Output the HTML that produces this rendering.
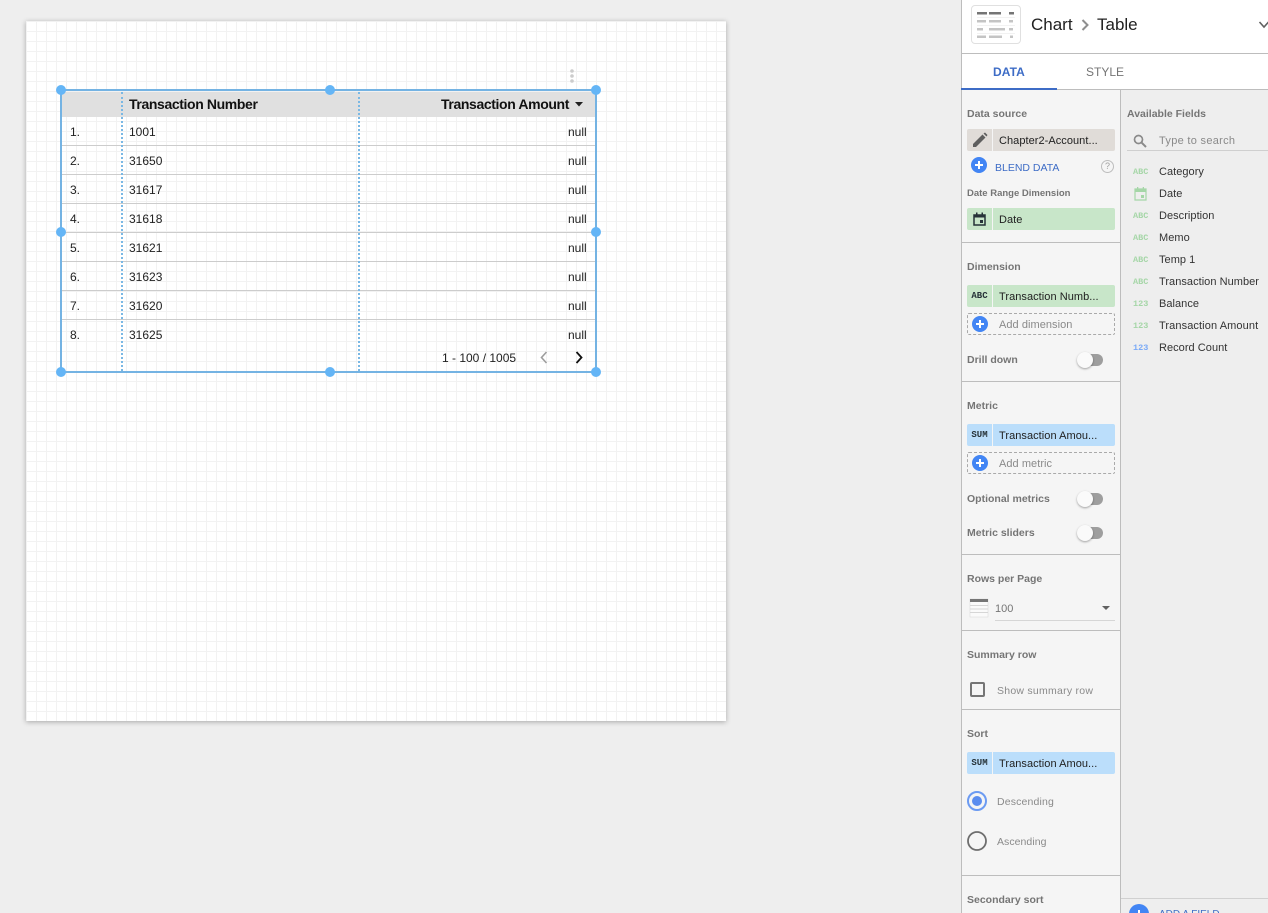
<!DOCTYPE html>
<html><head><meta charset="utf-8">
<style>
html,body{margin:0;padding:0;width:1268px;height:913px;overflow:hidden;background:#eeeeee;font-family:"Liberation Sans",sans-serif;color:#212121}
div,span{position:absolute;box-sizing:border-box;white-space:nowrap}
svg{position:absolute;overflow:visible}
.root{left:0;top:0;width:1268px;height:913px;overflow:hidden;background:#eeeeee}
.canvas{left:26px;top:21px;width:700px;height:700px;background-color:#fff;background-image:linear-gradient(to right,#f2f2f2 1px,transparent 1px),linear-gradient(to bottom,#f2f2f2 1px,transparent 1px);background-size:10px 10px;background-position:0 0;box-shadow:0 1px 5px rgba(0,0,0,.3)}
.t{font-size:12px;line-height:16px;color:#212121}
.th{font-size:14px;font-weight:bold;line-height:18px;color:#111;letter-spacing:-.38px}
.hl{left:62px;width:533px;height:1px;background:#cccccc}
.h{width:10px;height:10px;border-radius:50%;background:#64b5f6}
.lab{left:967px;font-size:10.5px;font-weight:bold;color:#757575;line-height:16px}
.div{left:962px;width:158px;height:1px;background:#bdbdbd}
.ic{left:967px;width:25px;height:22px;border-radius:2px 0 0 2px;font-size:9px;font-weight:bold;text-align:center;line-height:23px;color:#263238}
.pill{left:993px;width:122px;height:22px;border-radius:0 2px 2px 0;font-size:11px;line-height:24px;padding-left:6px;color:#212121;letter-spacing:.05px}
.g{background:#c8e6c9}.b{background:#bbdefb}.n{background:#e0dcd8}
.dash{left:967px;width:148px;height:22px;border:1px dashed #aaaaaa;border-radius:2px}
.plus{width:16px;height:16px;border-radius:50%;background:linear-gradient(#fff,#fff) center/8px 2px no-repeat,linear-gradient(#fff,#fff) center/2px 8px no-repeat,#4285f4}
.ph{font-size:11px;line-height:16px;color:#8a8a8a;letter-spacing:.05px}
.tg{left:1077px;width:28px;height:16px}
.tr{left:7px;top:2px;width:19px;height:12px;border-radius:6px;background:#9e9e9e}
.kn{left:0;top:0;width:16px;height:16px;border-radius:50%;background:#fafafa;box-shadow:0 1px 2px rgba(0,0,0,.35)}
.fi{left:1159px;font-size:11px;line-height:16px;color:#333;letter-spacing:.04px}
.ft{left:1133px;width:15px;font-size:8.5px;font-weight:bold;line-height:14px;text-align:center;color:#a5d6a7;font-family:"Liberation Mono",monospace}
</style></head><body>
<div class="root">

<div class="canvas"></div>

<!-- table -->
<div style="left:62px;top:92px;width:533px;height:25px;background:#e0e0e0"></div>
<div class="hl" style="top:145px"></div><div class="hl" style="top:174px"></div><div class="hl" style="top:203px"></div><div class="hl" style="top:232px"></div><div class="hl" style="top:261px"></div><div class="hl" style="top:290px"></div><div class="hl" style="top:319px"></div>
<div style="left:121px;top:92px;width:0;height:279px;border-left:2px dotted #7ab8e4"></div>
<div style="left:358px;top:92px;width:0;height:279px;border-left:2px dotted #7ab8e4"></div>
<div style="left:60px;top:89px;width:537px;height:284px;border:2px solid #74b3e3"></div>
<div class="h" style="left:56px;top:85px"></div><div class="h" style="left:325px;top:85px"></div><div class="h" style="left:591px;top:85px"></div>
<div class="h" style="left:56px;top:227px"></div><div class="h" style="left:591px;top:227px"></div>
<div class="h" style="left:56px;top:367px"></div><div class="h" style="left:325px;top:367px"></div><div class="h" style="left:591px;top:367px"></div>
<svg style="left:569px;top:69px" width="6" height="14"><circle cx="3" cy="2" r="1.8" fill="#cccccc"/><circle cx="3" cy="7" r="1.8" fill="#cccccc"/><circle cx="3" cy="12" r="1.8" fill="#cccccc"/></svg>

<div class="th" style="left:129px;top:95px">Transaction Number</div>
<div class="th" style="left:441px;top:95px">Transaction Amount</div>
<svg style="left:575px;top:102px" width="8" height="5"><path d="M0 0H8L4 4.5Z" fill="#212121"/></svg>

<div class="t" style="left:70px;top:124px">1.</div><div class="t" style="left:129px;top:124px">1001</div><div class="t" style="left:568px;top:124px">null</div>
<div class="t" style="left:70px;top:153px">2.</div><div class="t" style="left:129px;top:153px">31650</div><div class="t" style="left:568px;top:153px">null</div>
<div class="t" style="left:70px;top:182px">3.</div><div class="t" style="left:129px;top:182px">31617</div><div class="t" style="left:568px;top:182px">null</div>
<div class="t" style="left:70px;top:211px">4.</div><div class="t" style="left:129px;top:211px">31618</div><div class="t" style="left:568px;top:211px">null</div>
<div class="t" style="left:70px;top:240px">5.</div><div class="t" style="left:129px;top:240px">31621</div><div class="t" style="left:568px;top:240px">null</div>
<div class="t" style="left:70px;top:269px">6.</div><div class="t" style="left:129px;top:269px">31623</div><div class="t" style="left:568px;top:269px">null</div>
<div class="t" style="left:70px;top:298px">7.</div><div class="t" style="left:129px;top:298px">31620</div><div class="t" style="left:568px;top:298px">null</div>
<div class="t" style="left:70px;top:327px">8.</div><div class="t" style="left:129px;top:327px">31625</div><div class="t" style="left:568px;top:327px">null</div>

<div class="t" style="left:442px;top:350px">1 - 100 / 1005</div>
<svg style="left:540px;top:351px" width="8" height="13"><path d="M6.5 1L1.5 6.5L6.5 12" fill="none" stroke="#9e9e9e" stroke-width="1.6"/></svg>
<svg style="left:575px;top:351px" width="8" height="13"><path d="M1.5 1L6.5 6.5L1.5 12" fill="none" stroke="#111" stroke-width="1.8"/></svg>

<!-- panel -->
<div style="left:961px;top:0;width:307px;height:913px;background:#eeeeee;border-left:1px solid #bdbdbd"></div>
<div style="left:962px;top:0;width:306px;height:54px;background:#fff;border-bottom:1px solid #bdbdbd"></div>
<div style="left:962px;top:54px;width:306px;height:36px;background:#fff;border-bottom:1px solid #bdbdbd"></div>
<div style="left:962px;top:90px;width:158px;height:823px;background:#f5f5f5"></div>
<div style="left:1120px;top:90px;width:1px;height:823px;background:#bdbdbd"></div>
<div style="left:961px;top:88px;width:96px;height:2px;background:#3d6cc6"></div>

<!-- chart icon -->
<div style="left:971px;top:5px;width:50px;height:39px;border:1px solid #e0e0e0;border-radius:4px;background:#fff"></div>
<svg style="left:977px;top:12px" width="38" height="27">
<g fill="#757575"><rect x="0" y="0" width="10" height="2.5"/><rect x="12" y="0" width="12" height="2.5"/><rect x="32" y="0" width="5" height="2.5"/></g>
<g fill="#c4c4c4"><rect x="0" y="8" width="9" height="2.5"/><rect x="12" y="8" width="12" height="2.5"/><rect x="32" y="8" width="4" height="2.5"/>
<rect x="0" y="16" width="6" height="2.5"/><rect x="12" y="16" width="16" height="2.5"/><rect x="32" y="16" width="4" height="2.5"/>
<rect x="0" y="23.5" width="9" height="2.5"/><rect x="12" y="23.5" width="13" height="2.5"/><rect x="33" y="23.5" width="3" height="2.5"/></g>
<g fill="#f2f2f2"><rect x="0" y="5" width="38" height="1"/><rect x="0" y="13" width="38" height="1"/><rect x="0" y="21" width="38" height="1"/></g>
</svg>
<div style="left:1031px;top:15px;font-size:17px;line-height:20px;color:#212121">Chart</div>
<svg style="left:1081px;top:19px" width="8" height="12"><path d="M1.5 1L6.5 6L1.5 11" fill="none" stroke="#8f8f8f" stroke-width="2"/></svg>
<div style="left:1097px;top:15px;font-size:17px;line-height:20px;color:#212121">Table</div>
<svg style="left:1259px;top:21px" width="10" height="8"><path d="M0.5 1L5 6L9.5 1" fill="none" stroke="#616161" stroke-width="1.6"/></svg>

<div style="left:993px;top:64px;font-size:12px;font-weight:bold;line-height:16px;color:#3d6cc6;letter-spacing:.1px">DATA</div>
<div style="left:1086px;top:64px;font-size:12px;line-height:16px;color:#757575">STYLE</div>

<!-- Left column -->
<div class="lab" style="top:106px">Data source</div>
<div class="ic n" style="top:129px"></div>
<svg style="left:972px;top:132px" width="16" height="16"><path d="M1 15V12L10.5 2.5L13.5 5.5L4 15ZM11.5 1.5L13 0.5L15.5 3L14.5 4.5Z" fill="#5f5f5f"/></svg>
<div class="pill n" style="top:129px">Chapter2-Account...</div>
<div class="plus" style="left:971px;top:157px"></div>
<div style="left:995px;top:160px;font-size:10.5px;line-height:16px;color:#3d6cc6">BLEND DATA</div>
<div style="left:1101px;top:160px;width:13px;height:13px;border:1.5px solid #bdbdbd;border-radius:50%;font-size:9px;line-height:10px;text-align:center;color:#9e9e9e">?</div>
<div class="lab" style="top:186px;font-size:9.5px">Date Range Dimension</div>
<div class="ic g" style="top:208px"></div>
<svg style="left:973px;top:212px" width="13" height="14"><path d="M1 3H12V13H1Z" fill="none" stroke="#263238" stroke-width="1.5"/><path d="M1 3H12V5.5H1Z" fill="#263238"/><rect x="3" y="0.5" width="1.5" height="3" fill="#263238"/><rect x="8.5" y="0.5" width="1.5" height="3" fill="#263238"/><rect x="7" y="8" width="3" height="3" fill="#263238"/></svg>
<div class="pill g" style="top:208px">Date</div>
<div class="div" style="top:242px"></div>

<div class="lab" style="top:259px">Dimension</div>
<div class="ic g" style="top:285px;font-family:'Liberation Mono',monospace">ABC</div>
<div class="pill g" style="top:285px">Transaction Numb...</div>
<div class="dash" style="top:313px"></div>
<div class="plus" style="left:972px;top:316px"></div>
<div class="ph" style="left:999px;top:317px">Add dimension</div>
<div class="lab" style="top:352px">Drill down</div>
<div class="tg" style="top:352px"><div class="tr"></div><div class="kn"></div></div>
<div class="div" style="top:381px"></div>

<div class="lab" style="top:398px">Metric</div>
<div class="ic b" style="top:424px;font-family:'Liberation Mono',monospace">SUM</div>
<div class="pill b" style="top:424px">Transaction Amou...</div>
<div class="dash" style="top:452px"></div>
<div class="plus" style="left:972px;top:455px"></div>
<div class="ph" style="left:999px;top:456px">Add metric</div>
<div class="lab" style="top:491px">Optional metrics</div>
<div class="tg" style="top:491px"><div class="tr"></div><div class="kn"></div></div>
<div class="lab" style="top:525px">Metric sliders</div>
<div class="tg" style="top:525px"><div class="tr"></div><div class="kn"></div></div>
<div class="div" style="top:554px"></div>

<div class="lab" style="top:571px">Rows per Page</div>
<svg style="left:970px;top:599px" width="18" height="18"><rect x="0" y="0" width="18" height="18" fill="#fafafa" stroke="#d6d6d6" stroke-width=".5"/><rect x="0" y="0" width="18" height="3" fill="#757575"/><path d="M0 6.5H18M0 10H18M0 13.5H18" stroke="#d6d6d6" stroke-width="1"/></svg>
<div style="left:995px;top:601px;font-size:11px;line-height:16px;color:#757575">100</div>
<svg style="left:1102px;top:606px" width="8" height="5"><path d="M0 0H8L4 4Z" fill="#616161"/></svg>
<div style="left:995px;top:620px;width:120px;height:1px;background:#d6d6d6"></div>
<div class="div" style="top:630px"></div>

<div class="lab" style="top:647px">Summary row</div>
<div style="left:970px;top:682px;width:15px;height:15px;border:2px solid #757575;border-radius:2px"></div>
<div class="ph" style="left:997px;top:683px;font-size:10.5px;letter-spacing:.25px">Show summary row</div>
<div class="div" style="top:709px"></div>

<div class="lab" style="top:726px">Sort</div>
<div class="ic b" style="top:752px;font-family:'Liberation Mono',monospace">SUM</div>
<div class="pill b" style="top:752px">Transaction Amou...</div>
<svg style="left:967px;top:791px" width="20" height="20"><circle cx="10" cy="10" r="9" fill="none" stroke="#6c9bf2" stroke-width="2"/><circle cx="10" cy="10" r="5" fill="#5b8def"/></svg>
<div class="ph" style="left:997px;top:794px;font-size:10.5px;letter-spacing:.15px">Descending</div>
<svg style="left:967px;top:831px" width="20" height="20"><circle cx="10" cy="10" r="9" fill="none" stroke="#6e6e6e" stroke-width="1.8"/></svg>
<div class="ph" style="left:997px;top:834px;font-size:10.5px">Ascending</div>
<div class="div" style="top:875px"></div>
<div class="lab" style="top:892px">Secondary sort</div>

<!-- Right column -->
<div class="lab" style="left:1127px;top:106px">Available Fields</div>
<svg style="left:1133px;top:134px" width="14" height="14"><circle cx="5.5" cy="5.5" r="4" fill="none" stroke="#8a8a8a" stroke-width="1.7"/><path d="M8.5 8.5L13 13" stroke="#8a8a8a" stroke-width="2"/></svg>
<div class="ph" style="left:1159px;top:133px;letter-spacing:.3px">Type to search</div>
<div style="left:1127px;top:150px;width:141px;height:1px;background:#cfcfcf"></div>

<div class="ft" style="top:165px">ABC</div><div class="fi" style="top:164px">Category</div>
<svg style="left:1134px;top:186px" width="13" height="15"><path d="M1 3H12V14H1Z" fill="none" stroke="#a5d6a7" stroke-width="1.2"/><path d="M1 3H12V6H1Z" fill="#a5d6a7"/><rect x="3" y="1" width="1.3" height="2" fill="#a5d6a7"/><rect x="8.7" y="1" width="1.3" height="2" fill="#a5d6a7"/><rect x="7" y="9" width="3" height="3" fill="#a5d6a7"/></svg>
<div class="fi" style="top:186px">Date</div>
<div class="ft" style="top:209px">ABC</div><div class="fi" style="top:208px">Description</div>
<div class="ft" style="top:231px">ABC</div><div class="fi" style="top:230px">Memo</div>
<div class="ft" style="top:253px">ABC</div><div class="fi" style="top:252px">Temp 1</div>
<div class="ft" style="top:275px">ABC</div><div class="fi" style="top:274px">Transaction Number</div>
<div class="ft" style="top:297px">123</div><div class="fi" style="top:296px">Balance</div>
<div class="ft" style="top:319px">123</div><div class="fi" style="top:318px;letter-spacing:.1px">Transaction Amount</div>
<div class="ft" style="top:341px;color:#7baaf7">123</div><div class="fi" style="top:340px">Record Count</div>

<div style="left:1121px;top:898px;width:147px;height:1px;background:#d0d0d0"></div>
<div class="plus" style="left:1129px;top:904px;width:20px;height:20px"></div>
<div style="left:1159px;top:907px;font-size:10px;line-height:16px;color:#3d6cc6">ADD A FIELD</div>

</div>
</body></html>
